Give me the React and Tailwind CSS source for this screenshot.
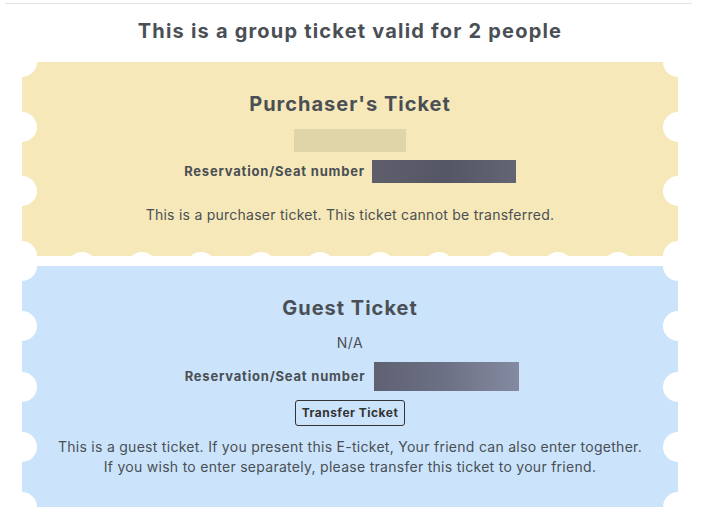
const font = { fontFamily: "Inter, 'Noto Sans', sans-serif" };

function Scallops({ height, bottom }) {
  const n = Math.max(1, Math.round(height / 62));
  const side = Array.from({ length: n + 1 }, (_, i) => (i * height) / n);
  const bottomXs = bottom ? Array.from({ length: 10 }, (_, i) => 60 + i * 59.5) : [];
  return (
    <>
      {side.map((y, i) => (
        <span key={"l" + i}>
          <span
            className="absolute w-[30px] h-[30px] rounded-full bg-white -left-[15px]"
            style={{ top: y - 15 }}
          />
          <span
            className="absolute w-[30px] h-[30px] rounded-full bg-white -right-[15px]"
            style={{ top: y - 15 }}
          />
        </span>
      ))}
      {bottomXs.map((x, i) => (
        <span
          key={"b" + i}
          className="absolute w-[30px] h-[30px] rounded-full bg-white"
          style={{ left: x - 15, top: height - 4 }}
        />
      ))}
    </>
  );
}

function Ticket({ color, height, bottom, children }) {
  return (
    <div
      className={`relative overflow-hidden mx-[22px] ${color}`}
      style={{ height }}
    >
      <Scallops height={height} bottom={bottom} />
      <div className="relative flex flex-col items-center">{children}</div>
    </div>
  );
}

export default function App() {
  return (
    <div className="w-[708px] h-[522px] bg-white overflow-hidden">
      <div className="w-[700px] text-[#4a4f55]" style={font}>
        <div className="ml-[5px] mr-[8px] mt-[3px] border-t border-[#e3e3e3]" />
        <h1 className="mt-[13px] text-center text-[20px] leading-[28px] font-bold tracking-[1.2px]">
          This is a group ticket valid for 2 people
        </h1>

        <div className="mt-[17px]">
          <Ticket color="bg-[#f6e8b8]" height={194} bottom>
            <h2 className="mt-[28px] text-[20px] leading-[28px] font-bold tracking-[1px]">
              Purchaser's Ticket
            </h2>
            <div className="mt-[11px] w-[112px] h-[23px] bg-[#e0d4a9]" />
            <div className="mt-[8px] flex items-center gap-[7px]">
              <span className="text-[13px] font-bold tracking-[0.8px]">Reservation/Seat number</span>
              <span className="w-[144px] h-[23px] bg-gradient-to-r from-[#5f5f6c] via-[#555665] to-[#646574]" />
            </div>
            <p className="mt-[22px] text-[14px] leading-[20px] tracking-[0.25px]">
              This is a purchaser ticket. This ticket cannot be transferred.
            </p>
          </Ticket>
        </div>

        <div className="mt-[10px]">
          <Ticket color="bg-[#cbe4fb]" height={241}>
            <h2 className="mt-[28px] text-[20px] leading-[28px] font-bold tracking-[1px]">
              Guest Ticket
            </h2>
            <p className="mt-[11px] text-[14px] leading-[20px] tracking-[0.5px]">N/A</p>
            <div className="mt-[9px] ml-[4px] flex items-center gap-[9px]">
              <span className="text-[13px] font-bold tracking-[0.8px]">Reservation/Seat number</span>
              <span className="w-[145px] h-[29px] bg-gradient-to-r from-[#5f6173] via-[#6d7185] to-[#848aa0]" />
            </div>
            <button className="mt-[9px] h-[26px] px-[6px] border border-[#333] rounded-[3px] text-[12px] font-bold text-[#333] tracking-[0.5px]">
              Transfer Ticket
            </button>
            <p className="mt-[11px] text-[14px] leading-[20px] text-center tracking-[0.28px]">
              This is a guest ticket. If you present this E-ticket, Your friend can also enter together.
              <br />
              If you wish to enter separately, please transfer this ticket to your friend.
            </p>
          </Ticket>
        </div>
      </div>
    </div>
  );
}
